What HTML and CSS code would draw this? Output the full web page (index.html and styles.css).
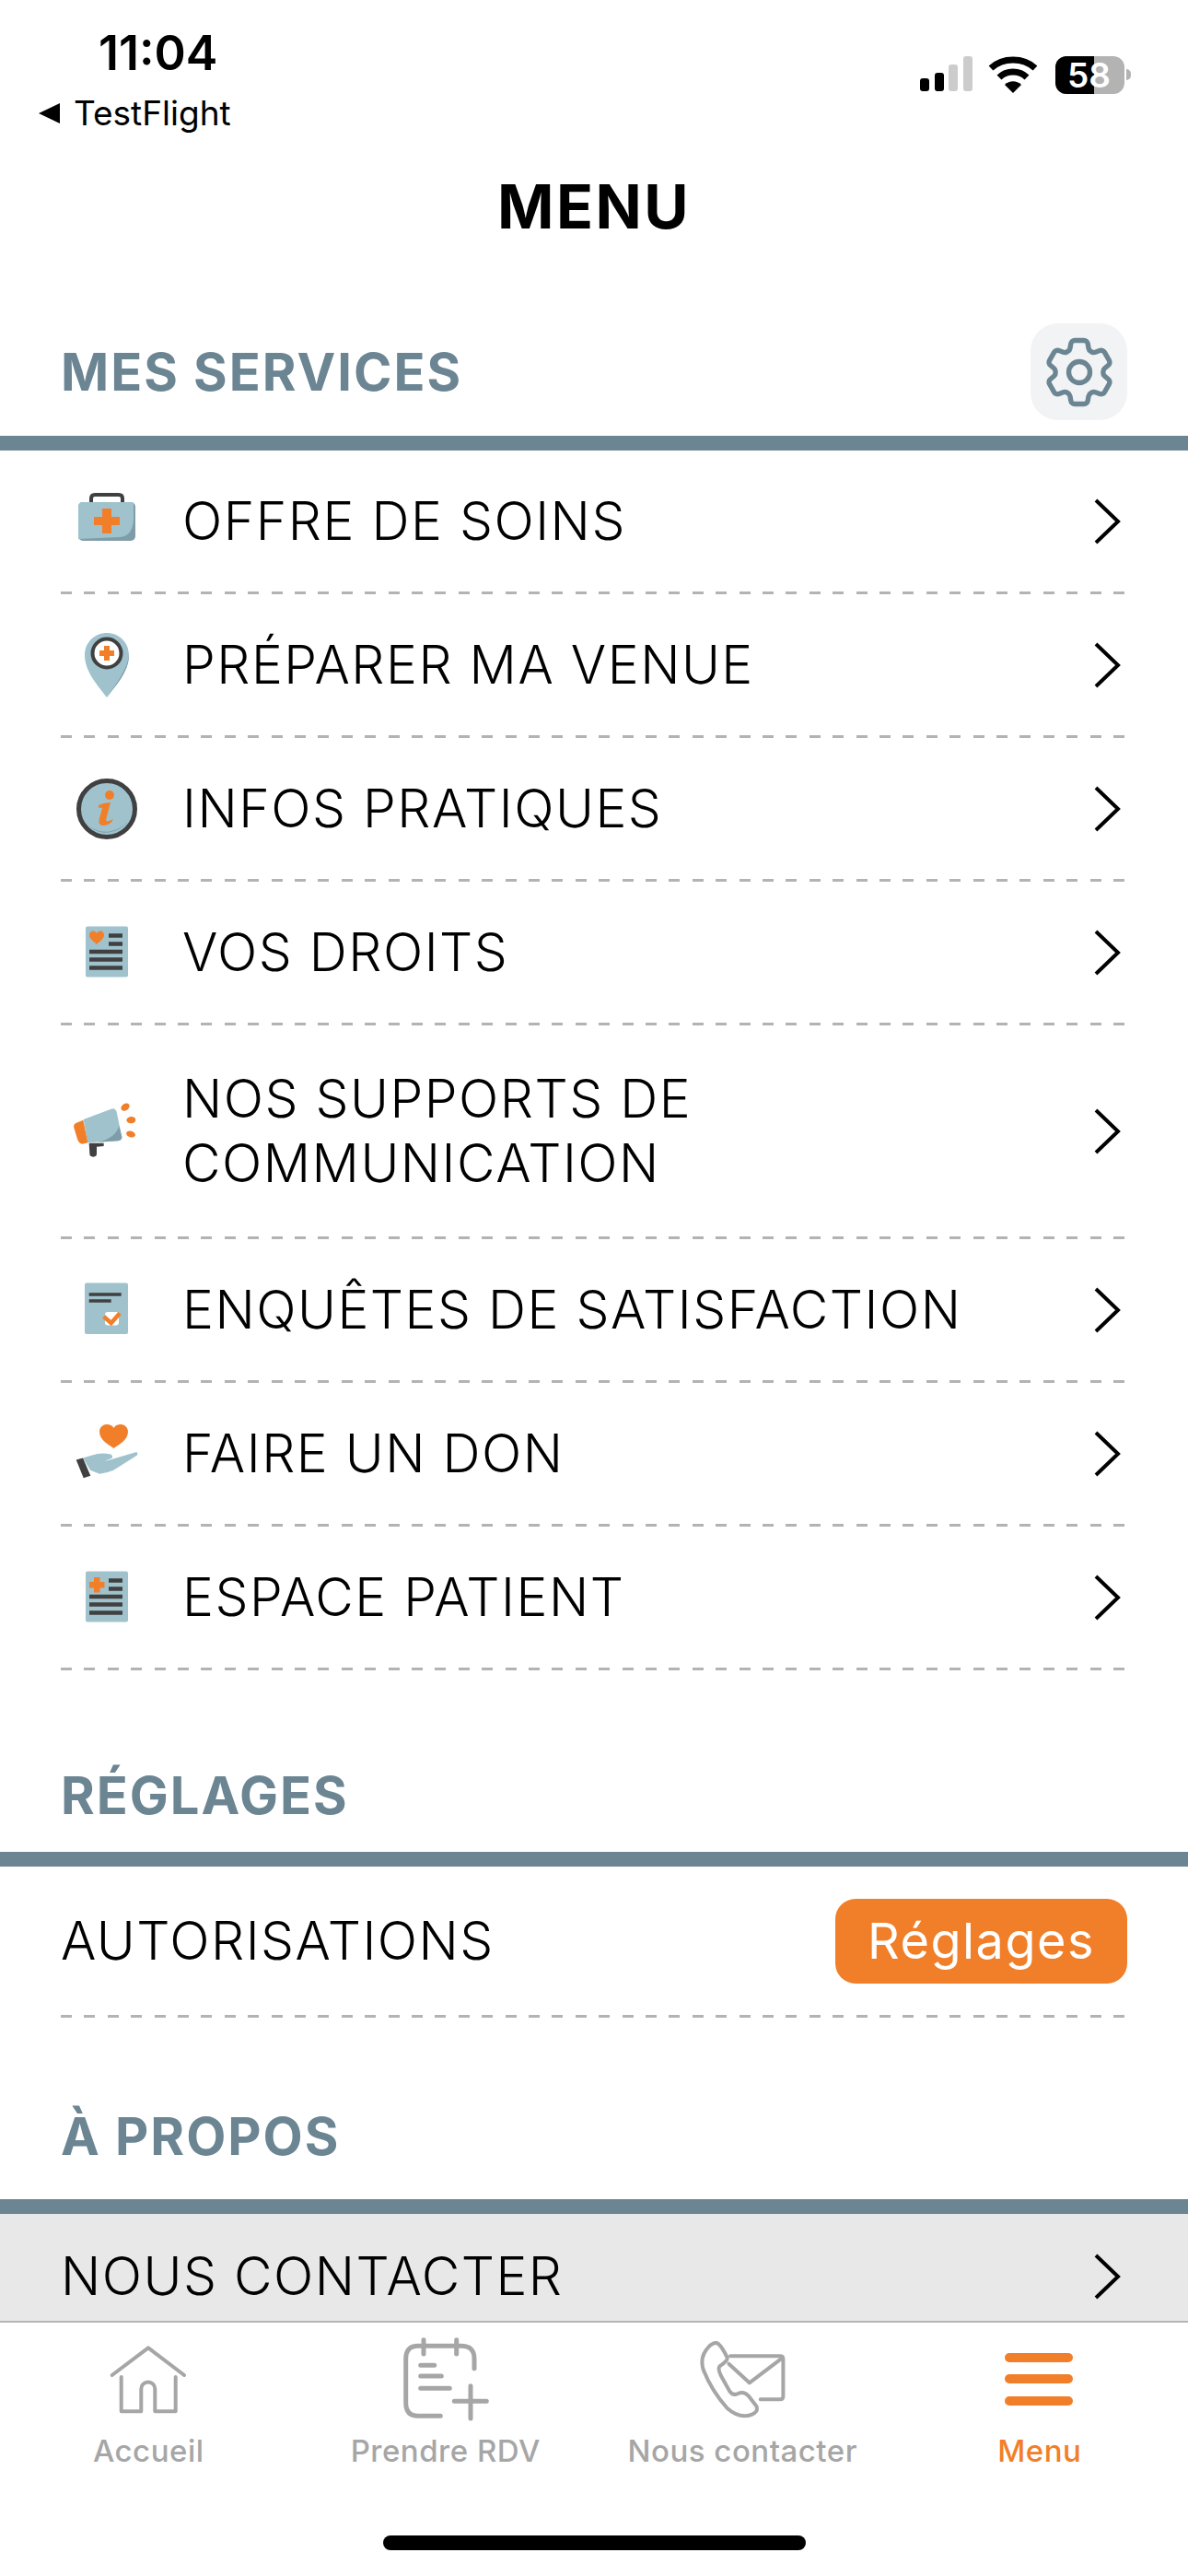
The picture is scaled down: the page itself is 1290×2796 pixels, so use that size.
FILE: index.html
```html
<!DOCTYPE html>
<html lang="fr">
<head>
    <meta charset="UTF-8">
    <meta name="viewport" content="width=device-width, initial-scale=1.0">
    <title>Menu</title>
    <link rel="stylesheet" href="styles.css">
</head>
<body>
    <div id="app">
        <div class="status">
            <div class="status-left">
                <div class="time">11:04</div>
                <div class="back"><span class="back-arrow"></span>TestFlight</div>
            </div>
            <div class="status-right">
                <svg class="signal" width="58" height="40" viewBox="0 0 58 40">
                    <rect x="1" y="24" width="10" height="14" rx="3" fill="#000"/>
                    <rect x="17" y="18" width="10" height="20" rx="3" fill="#000"/>
                    <rect x="32" y="9" width="10" height="29" rx="3" fill="#ccc"/>
                    <rect x="48" y="0" width="10" height="38" rx="3" fill="#ccc"/>
                </svg>
                <svg class="wifi" width="54" height="40" viewBox="0 0 54 40">
                    <path d="M3 13 C16 1 38 1 51 13" fill="none" stroke="#000" stroke-width="7"/>
                    <path d="M12 23 C20 15 34 15 42 23" fill="none" stroke="#000" stroke-width="7"/>
                    <path d="M18 31 C23 26 31 26 36 31 L27 40 Z" fill="#000"/>
                </svg>
                <div class="battery"><span class="battery-level"></span><span class="battery-text">58</span></div>
                <span class="battery-nub"></span>
            </div>
        </div>

        <h1 class="page-title">MENU</h1>

        <div class="section-head section-head-first">
            <h2>MES SERVICES</h2>
            <button class="gear-button">
                <svg width="92" height="92" viewBox="0 0 24 24" fill="none" stroke="#6b8593" stroke-width="1.4">
                    <path d="M9.594 3.94c.09-.542.56-.94 1.11-.94h2.593c.55 0 1.02.398 1.11.94l.213 1.281c.063.374.313.686.645.87.074.04.147.083.22.127.325.196.72.257 1.075.124l1.217-.456a1.125 1.125 0 0 1 1.37.49l1.296 2.247a1.125 1.125 0 0 1-.26 1.431l-1.003.827c-.293.241-.438.613-.43.992a7.723 7.723 0 0 1 0 .255c-.008.378.137.75.43.991l1.004.827c.424.35.534.955.26 1.43l-1.298 2.247a1.125 1.125 0 0 1-1.369.491l-1.217-.456c-.355-.133-.75-.072-1.076.124a6.47 6.47 0 0 1-.22.128c-.331.183-.581.495-.644.869l-.213 1.281c-.09.543-.56.94-1.11.94h-2.594c-.55 0-1.019-.398-1.11-.94l-.213-1.281c-.062-.374-.312-.686-.644-.87a6.52 6.52 0 0 1-.22-.127c-.325-.196-.72-.257-1.076-.124l-1.217.456a1.125 1.125 0 0 1-1.369-.49l-1.297-2.247a1.125 1.125 0 0 1 .26-1.431l1.004-.827c.292-.24.437-.613.43-.991a6.932 6.932 0 0 1 0-.255c.007-.38-.138-.751-.43-.992l-1.004-.827a1.125 1.125 0 0 1-.26-1.43l1.297-2.247a1.125 1.125 0 0 1 1.37-.491l1.216.456c.356.133.751.072 1.076-.124.072-.044.146-.086.22-.128.332-.183.582-.495.644-.869l.214-1.28Z"/>
                    <path d="M15 12a3 3 0 1 1-6 0 3 3 0 0 1 6 0Z"/>
                </svg>
            </button>
        </div>
        <div class="section-bar"></div>
        <ul class="rows">
            <li class="row">
                <svg class="row-icon" viewBox="0 0 100 100">
                    <path d="M33 30 V25 Q33 21 37 21 H63 Q67 21 67 25 V30" fill="none" stroke="#404040" stroke-width="4"/>
                    <rect x="19" y="29" width="62" height="42" rx="5" fill="#7f9da9"/>
                    <path d="M24 29 H77 Q79 29 79 31 V48 Q78 66 64 67 L19 69 V34 Q19 29 24 29 Z" fill="#9fc2cd"/>
                    <path d="M45 36 H55 V45 H64 V54 H55 V63 H45 V54 H36 V45 H45 Z" fill="#f17f29"/>
                </svg>
                <span class="row-text">OFFRE DE SOINS</span>
                <svg class="chevron" width="36" height="52" viewBox="0 0 36 52"><path d="M6 3 L30 26 L6 49" fill="none" stroke="#000" stroke-width="4"/></svg>
            </li>
            <li class="row">
                <svg class="row-icon" viewBox="0 0 100 100">
                    <path d="M50 85 C42 74 26 58 26 39 C26 25 37 15 50 15 C63 15 74 25 74 39 C74 58 58 74 50 85 Z" fill="#9fc2cd"/>
                    <path d="M50 85 C58 74 74 58 74 39 C72 56 60 70 50 85 Z" fill="#7f9da9"/>
                    <circle cx="50" cy="37" r="15.5" fill="#fff" stroke="#404040" stroke-width="4"/>
                    <path d="M47 29 H53 V34 H58 V40 H53 V45 H47 V40 H42 V34 H47 Z" fill="#f17f29"/>
                </svg>
                <span class="row-text">PRÉPARER MA VENUE</span>
                <svg class="chevron" width="36" height="52" viewBox="0 0 36 52"><path d="M6 3 L30 26 L6 49" fill="none" stroke="#000" stroke-width="4"/></svg>
            </li>
            <li class="row">
                <svg class="row-icon" viewBox="0 0 100 100">
                    <circle cx="50" cy="50" r="30.5" fill="#9fc2cd" stroke="#404040" stroke-width="5"/>
                    <path d="M72 64 A28 28 0 0 1 30 68 A30 30 0 0 0 72 64 Z" fill="#7f9da9"/>
                    <circle cx="53" cy="35" r="5" fill="#f17f29"/>
                    <path d="M41 46 Q47 43 54 43 L49 62 Q49 65 57 61 Q54 68 46 68 Q40 68 42 60 L45 49 Q43 48 41 49 Z" fill="#f17f29"/>
                </svg>
                <span class="row-text">INFOS PRATIQUES</span>
                <svg class="chevron" width="36" height="52" viewBox="0 0 36 52"><path d="M6 3 L30 26 L6 49" fill="none" stroke="#000" stroke-width="4"/></svg>
            </li>
            <li class="row">
                <svg class="row-icon" viewBox="0 0 100 100">
                    <rect x="27" y="21.5" width="46" height="55" rx="2" fill="#9fc2cd"/>
                    <path d="M39 41 C35 37 31 35 31 31 C31 28 33 26.500 35 26.500 C37 26.500 38 27.500 39 29 C40 27.500 41 26.500 43 26.500 C45 26.500 47 28 47 31 C47 35 43 37 39 41 Z" fill="#f17f29"/>
                    <path d="M52 31.500 H67 M52 40.500 H67 M31 49 H67 M31 57.500 H67 M31 66.500 H67" stroke="#404040" stroke-width="4.500"/>
                </svg>
                <span class="row-text">VOS DROITS</span>
                <svg class="chevron" width="36" height="52" viewBox="0 0 36 52"><path d="M6 3 L30 26 L6 49" fill="none" stroke="#000" stroke-width="4"/></svg>
            </li>
            <li class="row row-tall">
                <svg class="row-icon" viewBox="18 -3 300 300">
                    <path d="M110 185 H158 V195 L135 197 V220 Q135 230 124 230 Q112 230 112 220 Z" fill="#404040"/>
                    <path d="M92 108 L182 74 Q195 70 200 84 L217 165 Q217 176 205 178 L105 184 Z" fill="#9fc2cd"/>
                    <path d="M208 130 L217 165 Q217 176 205 178 L140 182 Q195 170 208 130 Z" fill="#7f9da9"/>
                    <path d="M67 120 L91 110 L106 184 L88 188 Q76 187 72 172 L60 132 Q60 123 67 120 Z" fill="#f17f29"/>
                    <ellipse cx="228" cy="68" rx="15" ry="11" transform="rotate(-35 228 68)" fill="#f17f29"/>
                    <ellipse cx="247" cy="110" rx="15" ry="11" transform="rotate(-5 247 110)" fill="#f17f29"/>
                    <ellipse cx="246" cy="156" rx="15" ry="10" transform="rotate(15 246 156)" fill="#f17f29"/>
                </svg>
                <span class="row-text">NOS SUPPORTS DE<br>COMMUNICATION</span>
                <svg class="chevron" width="36" height="52" viewBox="0 0 36 52"><path d="M6 3 L30 26 L6 49" fill="none" stroke="#000" stroke-width="4"/></svg>
            </li>
            <li class="row">
                <svg class="row-icon" viewBox="0 0 100 100">
                    <rect x="26" y="20.500" width="47" height="55.500" rx="2" fill="#9fc2cd"/>
                    <path d="M30.700 33 H65.700 M30.700 40 H54.700" stroke="#404040" stroke-width="3.500"/>
                    <rect x="48" y="52" width="15" height="14.500" rx="3" fill="#fff"/>
                    <path d="M46.700 57 L54.700 64 L64 53.500" fill="none" stroke="#f17f29" stroke-width="4.500"/>
                </svg>
                <span class="row-text">ENQUÊTES DE SATISFACTION</span>
                <svg class="chevron" width="36" height="52" viewBox="0 0 36 52"><path d="M6 3 L30 26 L6 49" fill="none" stroke="#000" stroke-width="4"/></svg>
            </li>
            <li class="row">
                <svg class="row-icon" viewBox="0 0 100 100">
                    <path d="M57.500 44 C50 39 42 34 42 26 C42 21 46 18 50 18 C53 18 56 19 57.500 22 C59 19 62 18 65 18 C69 18 73 21 73 26 C73 34 65 39 57.500 44 Z" fill="#f17f29"/>
                    <path d="M24 54.500 L34 51.400 Q45 48 54 50.600 Q57 52 55.700 54.500 L47.300 58.300 L82.300 48 Q84 49 83 51.400 L57.300 67.800 Q50 71 42.300 71.700 L32 67.800 Z" fill="#9fc2cd"/>
                    <path d="M16.700 56.400 L24 54.500 L32.300 73.700 L24.700 76.300 Z" fill="#404040"/>
                </svg>
                <span class="row-text">FAIRE UN DON</span>
                <svg class="chevron" width="36" height="52" viewBox="0 0 36 52"><path d="M6 3 L30 26 L6 49" fill="none" stroke="#000" stroke-width="4"/></svg>
            </li>
            <li class="row">
                <svg class="row-icon" viewBox="0 0 100 100">
                    <rect x="27" y="21.500" width="46" height="55" rx="2" fill="#9fc2cd"/>
                    <path d="M36 28 H42.500 V33 H47.500 V39.500 H42.500 V44.500 H36 V39.500 H31 V33 H36 Z" fill="#f17f29"/>
                    <path d="M52 31.500 H67 M52 40.500 H67 M31 49 H67 M31 57.500 H67 M31 66.500 H67" stroke="#404040" stroke-width="4.500"/>
                </svg>
                <span class="row-text">ESPACE PATIENT</span>
                <svg class="chevron" width="36" height="52" viewBox="0 0 36 52"><path d="M6 3 L30 26 L6 49" fill="none" stroke="#000" stroke-width="4"/></svg>
            </li>
        </ul>

        <div class="section-head section-head-settings">
            <h2>RÉGLAGES</h2>
        </div>
        <div class="section-bar"></div>
        <ul class="rows">
            <li class="row row-settings">
                <span class="row-text">AUTORISATIONS</span>
                <button class="settings-button">Réglages</button>
            </li>
        </ul>

        <div class="section-head section-head-about">
            <h2>À PROPOS</h2>
        </div>
        <div class="section-bar"></div>
        <div class="contact-row">
            <span class="row-text">NOUS CONTACTER</span>
            <svg class="chevron" width="36" height="52" viewBox="0 0 36 52"><path d="M6 3 L30 26 L6 49" fill="none" stroke="#000" stroke-width="4"/></svg>
        </div>

        <nav class="tabbar">
            <div class="tabs">
                <div class="tab">
                    <svg class="tab-icon" viewBox="0 0 120 96" fill="none" stroke="#a6a6a6" stroke-width="4" stroke-linecap="round" stroke-linejoin="round">
                        <path d="M20.700 43 L60 13.300 L99 43"/>
                        <path d="M30.700 45 V82.300 H52.300 V58 a7.500 7.500 0 0 1 15 0 V82.300 H89.700 V45"/>
                    </svg>
                    <span class="tab-label">Accueil</span>
                </div>
                <div class="tab">
                    <svg class="tab-icon" viewBox="0 0 120 96" fill="none" stroke="#a6a6a6" stroke-width="5" stroke-linecap="round" stroke-linejoin="round">
                        <path d="M91 35.700 V25 Q91 11.300 77 11.300 H30 Q16.700 11.300 16.700 25 V73 Q16.700 87.300 30 87.300 H54.300"/>
                        <path d="M36 4.700 V20 M71.700 4.700 V20"/>
                        <path d="M32.700 32.300 H47.700 M32.700 44 H55.300 M32.700 57.300 H64.300"/>
                        <path d="M69.300 71.300 H104.300 M87 54.700 V90"/>
                    </svg>
                    <span class="tab-label">Prendre RDV</span>
                </div>
                <div class="tab">
                    <svg class="tab-icon" viewBox="18.750 18 360 288" fill="none" stroke="#a6a6a6" stroke-width="12" stroke-linecap="round" stroke-linejoin="round">
                        <path d="M160 85 H322 Q332 85 332 95 V215 Q332 226 322 226 H258"/>
                        <path d="M155 110 L222 172 L328 92"/>
                        <path d="M115 42 Q128 45 150 90 Q152 100 125 118 Q118 128 130 150 L158 200 Q168 215 185 207 Q205 198 222 218 L245 248 Q252 268 228 276 Q190 290 150 255 Q100 200 72 130 Q58 85 92 52 Q105 40 115 42 Z"/>
                    </svg>
                    <span class="tab-label">Nous contacter</span>
                </div>
                <div class="tab tab-active">
                    <svg class="tab-icon" viewBox="0 0 120 96">
                        <rect x="22" y="19" width="74" height="10" rx="5" fill="#f17f29"/>
                        <rect x="22" y="42" width="74" height="10" rx="5" fill="#f17f29"/>
                        <rect x="22" y="66" width="74" height="10" rx="5" fill="#f17f29"/>
                    </svg>
                    <span class="tab-label">Menu</span>
                </div>
            </div>
            <div class="home-indicator"></div>
        </nav>
    </div>
</body>
</html>
```
FILE: styles.css
```css
body {
    margin: 0;
    padding: 0;
    background-color: white;
    font-family: Inter, "Liberation Sans", sans-serif;
    color: black;
}
#app {
    width: 1290px;
    height: 2796px;
    overflow: hidden;
}

/* status bar */
.status {
    height: 160px;
    display: flex;
    justify-content: space-between;
    box-sizing: border-box;
    padding: 32px 62px 0 42px;
}
.time {
    margin-left: 65px;
    font-size: 52px;
    line-height: 52px;
    font-weight: 600;
}
.back {
    display: flex;
    align-items: center;
    gap: 15px;
    margin-top: 18px;
    font-size: 37px;
    line-height: 42px;
}
.back-arrow {
    width: 0;
    height: 0;
    border-top: 11px solid transparent;
    border-bottom: 11px solid transparent;
    border-right: 23px solid black;
}
.status-right {
    display: flex;
    align-items: flex-start;
    padding-top: 29px;
}
.wifi {
    margin-left: 17px;
}
.battery {
    position: relative;
    width: 75px;
    height: 41px;
    margin-left: 19px;
    border-radius: 12px;
    background-color: #b3b3b3;
}
.battery-level {
    display: block;
    width: 42px;
    height: 100%;
    border-radius: 12px 0 0 12px;
    background-color: black;
}
.battery-text {
    position: absolute;
    top: 0;
    left: 13px;
    font-size: 37px;
    line-height: 41px;
    font-weight: 600;
    color: white;
}
.battery-nub {
    width: 5px;
    height: 12px;
    margin: 14px 0 0 2px;
    border-radius: 0 6px 6px 0;
    background-color: #b3b3b3;
}

.page-title {
    height: 128px;
    margin: 0;
    font-size: 66px;
    line-height: 128px;
    font-weight: 700;
    letter-spacing: 2.5px;
    text-align: center;
}

/* sections */
.section-head {
    display: flex;
    align-items: center;
    justify-content: space-between;
    box-sizing: border-box;
    padding: 0 66px;
}
.section-head h2 {
    margin: 0;
    font-size: 56px;
    font-weight: 700;
    letter-spacing: 2px;
    color: #6b8593;
}
.section-head-first {
    margin-top: 63px;
    height: 122px;
    padding-bottom: 17px;
}
.section-head-settings {
    height: 197px;
    padding-top: 75px;
}
.section-head-about {
    height: 197px;
    padding-top: 60px;
}
.section-bar {
    height: 16px;
    background-color: #6b8593;
}
.gear-button {
    display: flex;
    align-items: center;
    justify-content: center;
    width: 105px;
    height: 105px;
    padding: 0;
    border: none;
    border-radius: 30px;
    background-color: #f1f3f4;
}

/* rows */
.rows {
    list-style: none;
    margin: 0 66px;
    padding: 0;
}
.row {
    display: flex;
    align-items: center;
    height: 156px;
    box-sizing: border-box;
    padding-bottom: 3px;
    background-image: repeating-linear-gradient(to right, #b3b3b3 0, #b3b3b3 12px, transparent 12px, transparent 25.4px);
    background-size: 100% 3px;
    background-position: bottom;
    background-repeat: no-repeat;
}
.row-tall {
    height: 232px;
}
.row-settings {
    height: 164px;
    justify-content: space-between;
}
.row-icon {
    flex: none;
    width: 100px;
    height: 100px;
    margin-right: 32px;
}
.row-text {
    flex: 1;
    font-size: 57px;
    line-height: 70px;
    font-weight: 350;
    letter-spacing: 1.5px;
}
.chevron {
    flex: none;
    margin-right: 4px;
}
.settings-button {
    width: 317px;
    height: 92px;
    padding: 0;
    border: none;
    border-radius: 22px;
    background-color: #f17f29;
    font-family: Inter, "Liberation Sans", sans-serif;
    font-size: 54px;
    letter-spacing: 1.5px;
    color: white;
}
.contact-row {
    display: flex;
    align-items: center;
    box-sizing: border-box;
    height: 116px;
    padding: 20px 66px 0 66px;
    background-color: #e8e8e8;
}

/* tab bar */
.tabbar {
    border-top: 2px solid #b5b5b5;
    background-color: white;
}
.tabs {
    display: grid;
    grid-template-columns: repeat(4, 1fr);
    padding-top: 14px;
}
.tab {
    display: flex;
    flex-direction: column;
    align-items: center;
    color: #a6a6a6;
}
.tab-active {
    color: #f17f29;
}
.tab-icon {
    width: 120px;
    height: 96px;
}
.tab-label {
    margin-top: 3px;
    font-size: 33px;
    line-height: 52px;
    font-weight: 450;
    letter-spacing: 0.5px;
}
.home-indicator {
    width: 459px;
    height: 16px;
    margin: 66px auto 0;
    border-radius: 8px;
    background-color: black;
}
```
